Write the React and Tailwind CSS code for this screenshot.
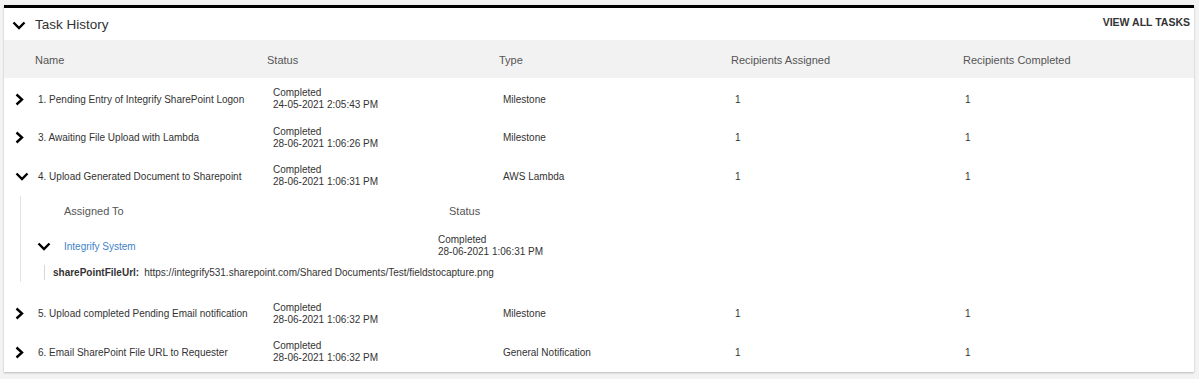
import React from "react";

const tasks = [
  { name: "1. Pending Entry of Integrify SharePoint Logon", date: "24-05-2021 2:05:43 PM", type: "Milestone" },
  { name: "3. Awaiting File Upload with Lambda", date: "28-06-2021 1:06:26 PM", type: "Milestone" },
  { name: "4. Upload Generated Document to Sharepoint", date: "28-06-2021 1:06:31 PM", type: "AWS Lambda", open: true },
  { name: "5. Upload completed Pending Email notification", date: "28-06-2021 1:06:32 PM", type: "Milestone" },
  { name: "6. Email SharePoint File URL to Requester", date: "28-06-2021 1:06:32 PM", type: "General Notification" },
];

const ChevronRight = () => (
  <svg width="9" height="13" viewBox="0 0 9 13" fill="none">
    <polyline points="1.5,1.5 7,6.5 1.5,11.5" stroke="#000" strokeWidth="2.4" />
  </svg>
);

const ChevronDown = ({ w = 14 }) => (
  <svg width={w} height="9" viewBox="0 0 14 9" fill="none">
    <polyline points="1.5,1.5 7,7 12.5,1.5" stroke="#000" strokeWidth="2.4" />
  </svg>
);

const TaskRow = ({ task }) => (
  <div className="flex h-[38.5px] items-center text-[10px] text-[#333]">
    <div className="w-[31px] pl-[11px] flex items-center">
      {task.open ? <ChevronDown w={14} /> : <ChevronRight />}
    </div>
    <div className="grid grid-cols-[232px_232px_232px_232px_1fr] flex-1 items-center">
      <div className="pl-[3px]">{task.name}</div>
      <div className="pl-[6px] leading-[12px]">
        <div>Completed</div>
        <div>{task.date}</div>
      </div>
      <div className="pl-[4px]">{task.type}</div>
      <div className="pl-[4px]">1</div>
      <div className="pl-[2px]">1</div>
    </div>
  </div>
);

export default function App() {
  return (
    <div
      className="w-full h-[379px] bg-[#f3f3f3] pl-[4px] pr-[5px] pt-[5px]"
      style={{ fontFamily: '"Liberation Sans", Arial, sans-serif' }}
    >
      <div className="bg-white border-t-[3px] border-black shadow-[0_1px_2px_rgba(0,0,0,0.25)] h-[367px]">
        {/* Header */}
        <div className="h-[32px] flex items-center justify-between pt-[2px]">
          <div className="flex items-center">
            <div className="pl-[8px] w-[31px] flex items-center">
              <ChevronDown />
            </div>
            <span className="text-[13.5px] text-[#333]">Task History</span>
          </div>
          <span className="text-[10.5px] font-bold text-[#333] pr-[4px] -mt-[5px]">VIEW ALL TASKS</span>
        </div>

        {/* Column headers */}
        <div className="h-[38px] bg-[#f2f2f2] flex items-center text-[11px] text-[#555] pt-[2px]">
          <div className="w-[31px]" />
          <div className="grid grid-cols-[232px_232px_232px_232px_1fr] flex-1">
            <div>Name</div>
            <div>Status</div>
            <div>Type</div>
            <div>Recipients Assigned</div>
            <div>Recipients Completed</div>
          </div>
        </div>

        <div className="h-[2px]" />

        {tasks.slice(0, 3).map((t) => (
          <TaskRow key={t.name} task={t} />
        ))}

        {/* Expanded task */}
        <div className="h-[99px]">
          <div className="ml-[16px] border-l border-[#e3e3e3] h-[86px] text-[10px] text-[#333]">
            <div className="h-[32px] flex items-center text-[11px] text-[#555]">
              <div className="w-[43px]" />
              <div className="w-[385px]">Assigned To</div>
              <div>Status</div>
            </div>
            <div className="h-[37px] flex items-center">
              <div className="w-[43px] pl-[16px] flex items-center">
                <ChevronDown />
              </div>
              <div className="w-[374px] text-[#3f83c9]">Integrify System</div>
              <div className="leading-[12px]">
                <div>Completed</div>
                <div>28-06-2021 1:06:31 PM</div>
              </div>
            </div>
            <div className="ml-[23px] border-l border-[#d6d6d6] h-[15px] flex items-center pl-[8px] text-[10px]">
              <span className="font-bold mr-[5px]">sharePointFileUrl:</span>
              <span>https://integrify531.sharepoint.com/Shared Documents/Test/fieldstocapture.png</span>
            </div>
          </div>
        </div>

        {tasks.slice(3).map((t) => (
          <TaskRow key={t.name} task={t} />
        ))}
      </div>
    </div>
  );
}
